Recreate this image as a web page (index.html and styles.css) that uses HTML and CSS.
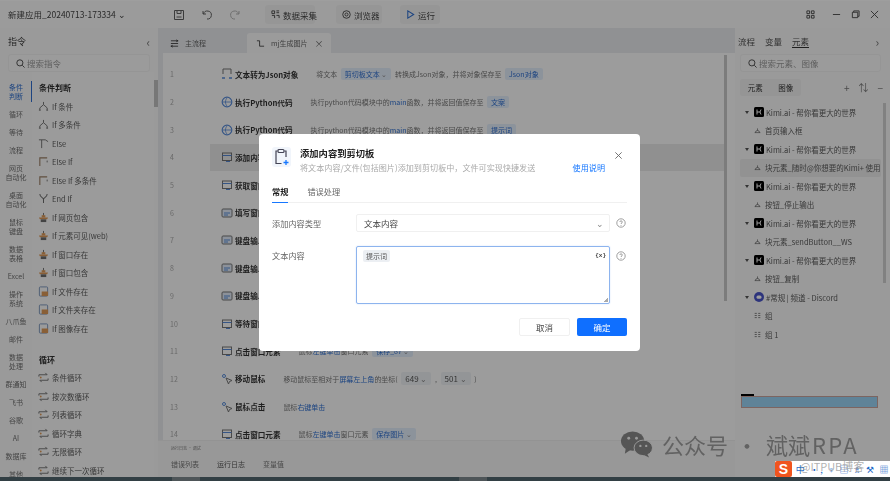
FILE: index.html
```html
<!DOCTYPE html>
<html lang="zh-CN">
<head>
    <meta charset="UTF-8">
    <title>新建应用_20240713-173334</title>
    <link rel="stylesheet" href="styles.css">
</head>
<body>

<svg class="defs" width="0" height="0">
    <symbol id="i-branch" viewBox="0 0 12 12"><path d="M6 1v3M6 4 2 7.500V10M6 4l4 3.500V10M1 10h2M9 10h2" fill="none" stroke="#555" stroke-width="1"/></symbol>
    <symbol id="i-else" viewBox="0 0 12 12"><path d="M1 2h7M4 2v9M8 2l3 2" fill="none" stroke="#555" stroke-width="1"/></symbol>
    <symbol id="i-elseif" viewBox="0 0 12 12"><path d="M2 11V2h8" fill="none" stroke="#8a6a4a" stroke-width="1.200"/><path d="M10 5v2" stroke="#555"/></symbol>
    <symbol id="i-end" viewBox="0 0 12 12"><path d="M2 1c0 4 4 4 4 6s0 3 0 4M10 1c0 4-4 4-4 6" fill="none" stroke="#555" stroke-width="1.100"/></symbol>
    <symbol id="i-cond" viewBox="0 0 12 12"><path d="M6 1v3" stroke="#555"/><path d="M1 6h10l-1 2H2z" fill="#d98a3c"/><rect x="3" y="8" width="6" height="3" fill="#555"/><rect x="4" y="3.500" width="4" height="2.500" fill="#d98a3c"/></symbol>
    <symbol id="i-file" viewBox="0 0 12 12"><rect x="1.500" y="1" width="9" height="10" rx="1" fill="none" stroke="#5f7fae"/><rect x="4" y="6" width="7" height="5" fill="#d98a3c"/></symbol>
    <symbol id="i-loop" viewBox="0 0 12 12"><path d="M1 5V3h9M8 1l2 2M11 7v2H2M4 11 2 9" fill="none" stroke="#555"/><circle cx="3" cy="6" r="1" fill="#d98a3c"/></symbol>
    <symbol id="i-json" viewBox="0 0 12 12"><path d="M2 6V1h8v5" fill="none" stroke="#555"/><path d="M1 10h3M8 10h3" stroke="#2f6fd0" stroke-width="1.500"/></symbol>
    <symbol id="i-py" viewBox="0 0 12 12"><circle cx="6" cy="6" r="4.800" fill="none" stroke="#2f6fd0" stroke-width="1.200"/><path d="M2 6h8M6 2c-2 2-2 6 0 8" fill="none" stroke="#2f6fd0" stroke-width=".8"/></symbol>
    <symbol id="i-win" viewBox="0 0 12 12"><rect x="1.500" y="2" width="9" height="7.500" fill="none" stroke="#555"/><path d="M1.500 4.500h9M5 10.500h4" stroke="#2f6fd0"/></symbol>
    <symbol id="i-key" viewBox="0 0 12 12"><rect x="1" y="2" width="10" height="8" rx="1" fill="#dde8f7" stroke="#555"/><path d="M3 6h6M3 8h4" stroke="#2f6fd0"/></symbol>
    <symbol id="i-mouse" viewBox="0 0 12 12"><circle cx="3" cy="3" r="1.500" fill="none" stroke="#2f6fd0"/><path d="M5 5l6 2.500-2.500 1-1 2.500z" fill="none" stroke="#555"/></symbol>
    <symbol id="i-elem" viewBox="0 0 10 10"><path d="M1 8h8M2 8a3 3 0 0 1 6 0M5 2v3" fill="none" stroke="#555" stroke-width=".9"/></symbol>
    <symbol id="i-grid" viewBox="0 0 10 10"><path d="M1 2h3M1 5h3M1 8h3M6 2h3M6 5h3M6 8h3" stroke="#555"/></symbol>
    <symbol id="i-kimi" viewBox="0 0 10 10"><rect width="10" height="10" rx="1.500" fill="#000"/><path d="M3 2.500v5M3 5h3l1-2.500M6 5l1 2.500" fill="none" stroke="#fff"/></symbol>
    <symbol id="i-discord" viewBox="0 0 10 10"><circle cx="5" cy="5" r="5" fill="#4a55c8"/><rect x="2.500" y="3.500" width="5" height="3.200" rx="1.500" fill="#fff"/></symbol>
    <symbol id="i-help" viewBox="0 0 10 10"><circle cx="5" cy="5" r="4.200" fill="none" stroke="#888" stroke-width=".8"/><path d="M3.800 4c0-1.600 2.500-1.600 2.500 0 0 1-1.300 1-1.300 2M5 7v.8" fill="none" stroke="#888" stroke-width=".8"/></symbol>
</svg>

<div class="app">
    <header class="titlebar">
        <div class="app-name">新建应用_20240713-173334 <span class="caret">⌄</span></div>
        <div class="tools">
            <svg class="tool-ico" viewBox="0 0 12 12"><path d="M1.500 1.500h9v9h-9zM4 1.500v3h4v-3M3.500 8h5" fill="none" stroke="#444"/></svg>
            <svg class="tool-ico" viewBox="0 0 12 12"><path d="M2 2v3h3M2.500 5A4 4 0 1 1 6 10" fill="none" stroke="#444"/></svg>
            <svg class="tool-ico dim" viewBox="0 0 12 12"><path d="M10 2v3H7M9.500 5A4 4 0 1 0 6 10" fill="none" stroke="#777"/></svg>
        </div>
        <div class="top-btn btn-data">
            <svg class="btn-ico" viewBox="0 0 10 10"><path d="M1 1h3v3H1zM6 1h3M6 3h3M1 6h3v3M6 6h3v3" fill="none" stroke="#444"/></svg>数据采集
        </div>
        <div class="top-btn btn-browser">
            <svg class="btn-ico" viewBox="0 0 10 10"><circle cx="5" cy="5" r="4.200" fill="none" stroke="#444"/><circle cx="5" cy="5" r="1.700" fill="none" stroke="#444"/></svg>浏览器
        </div>
        <div class="top-btn btn-run">
            <svg class="btn-ico" viewBox="0 0 10 10"><path d="M2 1v8l6.500-4z" fill="none" stroke="#2f6fd0" stroke-width="1.200"/></svg>运行
        </div>
        <div class="win-controls">
            <svg class="win-ico" viewBox="0 0 10 10"><path d="M1 1h3v3H1zM6 1h3v3H6zM1 6h3v3H1zM6 6h3v3H6z" fill="none" stroke="#444"/></svg>
            <svg class="win-ico" viewBox="0 0 10 10"><path d="M1 5h8" stroke="#444"/></svg>
            <svg class="win-ico" viewBox="0 0 10 10"><path d="M1.500 2.500h6v6h-6zM3 2.500V1h6v6H7.500" fill="none" stroke="#444"/></svg>
            <svg class="win-ico" viewBox="0 0 10 10"><path d="M1 1l8 8M9 1l-8 8" stroke="#444"/></svg>
        </div>
    </header>

    <div class="workspace">
        <aside class="left">
            <div class="panel-head"><span>指令</span><span class="chev">‹</span></div>
            <div class="search">
                <svg class="search-ico" viewBox="0 0 10 10"><circle cx="4.300" cy="4.300" r="3.400" fill="none" stroke="#444"/><path d="M7 7l2.500 2.500" stroke="#444"/></svg>搜索指令
            </div>
            <div class="left-body">
                <nav class="rail">
                    <div class="rail-item two active">条件<br>判断</div>
                    <div class="rail-item">循环</div>
                    <div class="rail-item">等待</div>
                    <div class="rail-item">流程</div>
                    <div class="rail-item two">网页<br>自动化</div>
                    <div class="rail-item two">桌面<br>自动化</div>
                    <div class="rail-item two">鼠标<br>键盘</div>
                    <div class="rail-item two">数据<br>表格</div>
                    <div class="rail-item">Excel</div>
                    <div class="rail-item two">操作<br>系统</div>
                    <div class="rail-item">八爪鱼</div>
                    <div class="rail-item">邮件</div>
                    <div class="rail-item two">数据<br>处理</div>
                    <div class="rail-item">群通知</div>
                    <div class="rail-item">飞书</div>
                    <div class="rail-item">谷歌</div>
                    <div class="rail-item">AI</div>
                    <div class="rail-item">数据库</div>
                    <div class="rail-item">其他</div>
                </nav>
                <div class="cmds">
                    <h3 class="cmd-head">条件判断</h3>
                    <div class="cmd"><svg><use href="#i-branch"/></svg>If 条件</div>
                    <div class="cmd"><svg><use href="#i-branch"/></svg>If 多条件</div>
                    <div class="cmd"><svg><use href="#i-else"/></svg>Else</div>
                    <div class="cmd"><svg><use href="#i-elseif"/></svg>Else If</div>
                    <div class="cmd"><svg><use href="#i-elseif"/></svg>Else If 多条件</div>
                    <div class="cmd"><svg><use href="#i-end"/></svg>End If</div>
                    <div class="cmd"><svg><use href="#i-cond"/></svg>If 网页包含</div>
                    <div class="cmd"><svg><use href="#i-cond"/></svg>If 元素可见(web)</div>
                    <div class="cmd"><svg><use href="#i-cond"/></svg>If 窗口存在</div>
                    <div class="cmd"><svg><use href="#i-cond"/></svg>If 窗口包含</div>
                    <div class="cmd"><svg><use href="#i-file"/></svg>If 文件存在</div>
                    <div class="cmd"><svg><use href="#i-file"/></svg>If 文件夹存在</div>
                    <div class="cmd"><svg><use href="#i-file"/></svg>If 图像存在</div>
                    <h3 class="cmd-head second">循环</h3>
                    <div class="cmd"><svg><use href="#i-loop"/></svg>条件循环</div>
                    <div class="cmd"><svg><use href="#i-loop"/></svg>按次数循环</div>
                    <div class="cmd"><svg><use href="#i-loop"/></svg>列表循环</div>
                    <div class="cmd"><svg><use href="#i-loop"/></svg>循环字典</div>
                    <div class="cmd"><svg><use href="#i-loop"/></svg>无限循环</div>
                    <div class="cmd"><svg><use href="#i-loop"/></svg>继续下一次循环</div>
                </div>
                <div class="left-scroll"></div>
            </div>
        </aside>

        <main class="center">
            <div class="tabs">
                <div class="tab">
                    <svg viewBox="0 0 10 10"><path d="M1 2h8M7 1l2 1-2 1M9 8H1M3 7 1 8l2 1M1 5h8" fill="none" stroke="#444"/></svg>主流程
                </div>
                <div class="tab open">
                    <svg viewBox="0 0 10 10"><path d="M1 2h3v6h5" fill="none" stroke="#444"/></svg>mj生成图片<span class="tab-x">×</span>
                </div>
            </div>
            <div class="flow">
                <div class="steps">
                    <div class="step"><span class="num">1</span><svg><use href="#i-json"/></svg><b>文本转为Json对象</b><span class="desc">将文本 <span class="pill">剪切板文本 <i>⌄</i></span> 转换成Json对象，并将对象保存至 <span class="pill">Json对象</span></span></div>
                    <div class="step"><span class="num">2</span><svg><use href="#i-py"/></svg><b>执行Python代码</b><span class="desc">执行python代码模块中的<em>main</em>函数，并将返回值保存至 <span class="pill">文案</span></span></div>
                    <div class="step"><span class="num">3</span><svg><use href="#i-py"/></svg><b>执行Python代码</b><span class="desc">执行python代码模块中的<em>main</em>函数，并将返回值保存至 <span class="pill">提示词</span></span></div>
                    <div class="step current"><span class="num">4</span><svg><use href="#i-win"/></svg><b>添加内容到剪切板</b></div>
                    <div class="step"><span class="num">5</span><svg><use href="#i-win"/></svg><b>获取窗口</b></div>
                    <div class="step"><span class="num">6</span><svg><use href="#i-key"/></svg><b>填写窗口</b></div>
                    <div class="step"><span class="num">7</span><svg><use href="#i-key"/></svg><b>键盘输入</b></div>
                    <div class="step"><span class="num">8</span><svg><use href="#i-key"/></svg><b>键盘输入</b></div>
                    <div class="step"><span class="num">9</span><svg><use href="#i-key"/></svg><b>键盘输入</b></div>
                    <div class="step"><span class="num">10</span><svg><use href="#i-win"/></svg><b>等待窗口</b></div>
                    <div class="step"><span class="num">11</span><svg><use href="#i-win"/></svg><b>点击窗口元素</b><span class="desc">鼠标<em>左键单击</em>窗口元素 <span class="pill">保存_87 <i>⌄</i></span></span></div>
                    <div class="step"><span class="num">12</span><svg><use href="#i-mouse"/></svg><b>移动鼠标</b><span class="desc">移动鼠标至相对于<em>屏幕左上角</em>的坐标( <span class="pill grey">649 <i>⌄</i></span> , <span class="pill grey">501 <i>⌄</i></span> )</span></div>
                    <div class="step"><span class="num">13</span><svg><use href="#i-mouse"/></svg><b>鼠标点击</b><span class="desc">鼠标<em>右键单击</em></span></div>
                    <div class="step"><span class="num">14</span><svg><use href="#i-win"/></svg><b>点击窗口元素</b><span class="desc">鼠标<em>左键单击</em>窗口元素 <span class="pill">保存图片 <i>⌄</i></span></span></div>
                </div>
                <div class="flow-scroll"></div>
            </div>
            <div class="bottom">
                <div class="bottom-note">运行日志 · 调试</div>
                <div class="bottom-tabs">
                    <span>错误列表</span>
                    <span class="on">运行日志</span>
                    <span>变量值</span>
                </div>
            </div>
        </main>

        <aside class="right">
            <div class="right-tabs"><span>流程</span><span>变量</span><span class="on">元素</span><span class="chev">›</span></div>
            <div class="search right-search">
                <svg class="search-ico" viewBox="0 0 10 10"><circle cx="4.300" cy="4.300" r="3.400" fill="none" stroke="#444"/><path d="M7 7l2.500 2.500" stroke="#444"/></svg>搜索元素、图像
            </div>
            <div class="sub-row">
                <div class="seg"><span>元素</span><span>图像</span></div>
                <div class="sub-tools"><span>+</span><span>⇅</span><span>−</span></div>
            </div>
            <div class="tree-wrap">
                <div class="tree">
                    <div class="node"><span class="arrow"></span><svg><use href="#i-kimi"/></svg>Kimi.ai - 帮你看更大的世界</div>
                    <div class="leaf"><svg><use href="#i-elem"/></svg>首页输入框</div>
                    <div class="node"><span class="arrow"></span><svg><use href="#i-kimi"/></svg>Kimi.ai - 帮你看更大的世界</div>
                    <div class="leaf picked"><svg><use href="#i-elem"/></svg>块元素_随时@你想要的Kimi+ 使用</div>
                    <div class="node"><span class="arrow"></span><svg><use href="#i-kimi"/></svg>Kimi.ai - 帮你看更大的世界</div>
                    <div class="leaf"><svg><use href="#i-elem"/></svg>按钮_停止输出</div>
                    <div class="node"><span class="arrow"></span><svg><use href="#i-kimi"/></svg>Kimi.ai - 帮你看更大的世界</div>
                    <div class="leaf"><svg><use href="#i-elem"/></svg>块元素_sendButton__WS</div>
                    <div class="node"><span class="arrow"></span><svg><use href="#i-kimi"/></svg>Kimi.ai - 帮你看更大的世界</div>
                    <div class="leaf"><svg><use href="#i-elem"/></svg>按钮_复制</div>
                    <div class="node"><span class="arrow"></span><svg><use href="#i-discord"/></svg>#常规 | 频道 - Discord</div>
                    <div class="leaf"><svg><use href="#i-grid"/></svg>组</div>
                    <div class="leaf"><svg><use href="#i-grid"/></svg>组 1</div>
                </div>
                <div class="tree-scroll"></div>
            </div>
            <div class="preview">
                <div class="preview-tag"></div>
                <div class="preview-img"></div>
            </div>
        </aside>
    </div>

    <div class="taskbar"><span class="task-a"></span><span class="task-b"></span></div>
</div>

<div class="overlay"></div> <!-- darkens the app behind the dialog -->

<div class="watermark">
    <svg class="wx" viewBox="0 0 34 28"><ellipse cx="13" cy="11" rx="12" ry="10" fill="#555"/><path d="M6 18l-1 6 6-4z" fill="#555"/><ellipse cx="24" cy="18" rx="9.500" ry="8" fill="#555" stroke="#999"/><path d="M28 24l2 4-6-3z" fill="#555"/><circle cx="9" cy="8" r="1.500" fill="#999"/><circle cx="17" cy="8" r="1.500" fill="#999"/><circle cx="21" cy="16" r="1.200" fill="#999"/><circle cx="27" cy="16" r="1.200" fill="#999"/></svg>
    <span>公众号</span><span class="wm-dot">·</span><span>斌斌<span class="wm-rpa">RPA</span></span>
</div>

<div class="ime">
    <span class="ime-logo">S</span>
    <span class="ime-text">中 ·, ♆ ▤ ♗ ⚒ ▦</span>
    <span class="ime-mark">@ITPUB博客</span>
</div>

<section class="dialog">
    <div class="dialog-head">
        <div class="dialog-ico">
            <svg viewBox="0 0 18 20"><path d="M5 4H3.500v12.500H9M12 4h1.500v6" fill="none" stroke="#445" stroke-width="1.200"/><rect x="5.500" y="2.500" width="6" height="3" rx="1" fill="none" stroke="#445" stroke-width="1.200"/><path d="M13.500 13v5M11 15.500h5" stroke="#1677ff" stroke-width="1.300"/></svg>
        </div>
        <div class="dialog-title">
            <h2>添加内容到剪切板</h2>
            <p>将文本内容/文件(包括图片)添加到剪切板中，文件可实现快捷发送<a>使用说明</a></p>
        </div>
        <svg class="dialog-close" viewBox="0 0 10 10"><path d="M1.500 1.500l7 7M8.500 1.500l-7 7" stroke="#666"/></svg>
    </div>
    <div class="dialog-tabs"><span class="on">常规</span><span>错误处理</span></div>
    <div class="form-row first">
        <label>添加内容类型</label>
        <div class="select">文本内容<span class="select-caret">⌄</span></div>
        <svg class="help"><use href="#i-help"/></svg>
    </div>
    <div class="form-row top">
        <label>文本内容</label>
        <div class="textarea">
            <span class="tag">提示词</span>
            <span class="var">{x}</span>
            <span class="resize"></span>
        </div>
        <svg class="help"><use href="#i-help"/></svg>
    </div>
    <div class="dialog-foot">
        <button class="btn">取消</button>
        <button class="btn primary">确定</button>
    </div>
</section>

</body>
</html>
```

FILE: styles.css
```css
/* Base */
* {
    box-sizing: border-box;
}

html, body {
    margin: 0;
    padding: 0;
    height: 481px;
    overflow: hidden;
}

body {
    position: relative;
    font-family: "Noto Sans CJK SC", "Noto Sans", sans-serif;
    font-size: 7.5px;
    color: #333;
    background: #fff;
}

.defs {
    position: absolute;
}

/* App window behind the dialog */
.app {
    display: flex;
    flex-direction: column;
    width: 890px;
    height: 481px;
    border-top: 1px solid #fff;
    background: #fbfbfb;
    filter: blur(0.6px);
}

.titlebar {
    display: flex;
    align-items: center;
    height: 27px;
    flex: none;
    padding-left: 8px;
    background: #fbfbfb;
}

.app-name {
    width: 165px;
    font-size: 8.5px;
    color: #444;
    white-space: nowrap;
}

.caret {
    font-size: 9px;
}

.tools {
    display: flex;
    gap: 16px;
    width: 92px;
}

.tool-ico {
    width: 12px;
    height: 12px;
    opacity: 0.85;
}

.tool-ico.dim {
    opacity: 0.55;
}

.top-btn {
    display: flex;
    align-items: center;
    gap: 3px;
    height: 19px;
    padding: 0 6px;
    border-radius: 3px;
    font-size: 8.5px;
    color: #444;
    background: #f3f3f3;
    white-space: nowrap;
}

.btn-data {
    width: 50px;
}

.btn-browser {
    width: 46px;
    margin-left: 21px;
}

.btn-run {
    width: 40px;
    margin-left: 18px;
}

.btn-ico {
    width: 9px;
    height: 9px;
    flex: none;
}

.win-controls {
    display: flex;
    align-items: center;
    gap: 10px;
    margin-left: auto;
    padding-right: 11px;
}

.win-ico {
    width: 9px;
    height: 9px;
}

.win-ico:first-child {
    margin-right: 7px;
}

.workspace {
    flex: 1;
    display: flex;
    min-height: 0;
}

/* Left commands panel */
.left {
    width: 158px;
    flex: none;
    display: flex;
    flex-direction: column;
    background: #f8f8f8;
}

.panel-head {
    display: flex;
    justify-content: space-between;
    align-items: center;
    height: 26px;
    padding: 0 8px;
    font-size: 9px;
    color: #444;
}

.chev {
    font-size: 12px;
    color: #777;
}

.search {
    display: flex;
    align-items: center;
    gap: 2px;
    height: 18px;
    margin: 0 8px;
    padding-left: 7px;
    border: 1px solid #f1f1f1;
    border-radius: 3px;
    font-size: 8.5px;
    color: #999;
    background: #fafafa;
}

.search-ico {
    width: 9px;
    height: 9px;
    flex: none;
}

.left-body {
    flex: 1;
    display: flex;
    min-height: 0;
    overflow: hidden;
}

.rail {
    width: 32px;
    flex: none;
    padding-top: 6px;
    text-align: center;
    font-size: 7px;
    line-height: 9px;
    color: #707070;
    background: #f8f8f8;
}

.rail-item {
    display: flex;
    align-items: center;
    justify-content: center;
    height: 18px;
}

.rail-item.two {
    height: 27px;
}

.rail-item.active {
    color: #2f6fd0;
    background: linear-gradient(#2f6fd0, #2f6fd0) right 3px / 1.500px 21px no-repeat;
}

.cmds {
    flex: 1;
    padding: 7px 0 0 7px;
    background: #fbfbfb;
    min-width: 0;
}

.cmd-head {
    margin: 0;
    height: 18px;
    line-height: 18px;
    font-size: 8px;
    font-weight: 700;
    color: #333;
}

.cmd-head.second {
    margin-top: 13px;
}

.cmd {
    display: flex;
    align-items: center;
    gap: 3px;
    height: 18.500px;
    margin-left: -1px;
    color: #5c5c5c;
    white-space: nowrap;
}

.cmd svg {
    width: 11px;
    height: 11px;
    flex: none;
    opacity: 0.85;
}

.left-scroll {
    width: 4px;
    flex: none;
    height: 27px;
    margin-top: 8px;
    background: #c0c0c0;
    align-self: flex-start;
}

/* Center flow */
.center {
    flex: 1;
    min-width: 0;
    display: flex;
    flex-direction: column;
    background: #e8eaee;
}

.tabs {
    display: flex;
    align-items: flex-end;
    height: 25px;
    flex: none;
    padding-left: 12px;
}

.tab {
    display: flex;
    align-items: center;
    gap: 6px;
    height: 20px;
    width: 77px;
    font-size: 7px;
    color: #666;
}

.tab svg {
    width: 9px;
    height: 9px;
    flex: none;
}

.tab.open {
    width: 84px;
    padding-left: 9px;
    border-radius: 3px 3px 0 0;
    background: #fbfbfb;
}

.tab-x {
    margin-left: 1px;
    font-size: 9px;
}

.flow {
    flex: 1;
    min-height: 0;
    display: flex;
    margin-left: 5px;
    background: #fcfcfc;
    overflow: hidden;
}

.steps {
    flex: 1;
    min-width: 0;
    padding-top: 7.500px;
}

.step {
    display: flex;
    align-items: center;
    height: 27.700px;
    white-space: nowrap;
}

.step.current {
    background: linear-gradient(to right, transparent 47px, #e9e9e9 47px);
}

.num {
    width: 58px;
    flex: none;
    padding-left: 7px;
    font-size: 7px;
    color: #aaa;
}

.step svg {
    width: 12px;
    height: 12px;
    flex: none;
    margin-right: 2px;
    opacity: 0.8;
}

.step b {
    font-size: 7.600px;
    color: #333;
}

.desc {
    margin-left: 18px;
    font-size: 7px;
    color: #777;
}

.desc em {
    font-style: normal;
    color: #2f6fd0;
}

.pill {
    display: inline-block;
    margin: 0 2px;
    padding: 1px 4px;
    border-radius: 2px;
    color: #2f6fd0;
    background: #e3edfb;
}

.pill.grey {
    color: #555;
    background: #eef1f4;
    font-size: 8px;
}

.pill i {
    font-style: normal;
    color: #888;
}

.flow-scroll {
    width: 3px;
    flex: none;
    height: 246px;
    margin: 2px 8px 0 0;
    background: #c9c9c9;
}

.bottom {
    height: 37px;
    flex: none;
    padding-left: 13px;
    background: #f6f6f6;
    border-top: 1px solid #eee;
}

.bottom-note {
    height: 14px;
    line-height: 14px;
    font-size: 4px;
    color: #777;
}

.bottom-tabs {
    display: flex;
    gap: 18px;
    font-size: 7px;
    color: #777;
}

.bottom-tabs span {
    height: 22px;
    line-height: 18px;
}

.bottom-tabs .on {
    color: #555;
    box-shadow: 0 1px 0 #2f6fd0;
}

/* Right panel */
.right {
    width: 155px;
    flex: none;
    padding: 0 3px;
    background: #f8f8f8;
    display: flex;
    flex-direction: column;
}

.right-tabs {
    display: flex;
    align-items: center;
    gap: 10px;
    height: 26px;
    font-size: 8.500px;
    color: #555;
}

.right-tabs .on {
    border-bottom: 1px solid #333;
}

.right-tabs .chev {
    margin-left: auto;
    padding-right: 8px;
}

.right-search {
    margin: 0 0 0 2px;
    width: 141px;
}

.sub-row {
    display: flex;
    align-items: center;
    justify-content: space-between;
    height: 17px;
    margin: 7px 0 0 2px;
    padding-right: 4px;
}

.seg {
    display: flex;
    width: 61px;
    height: 17px;
    border-radius: 3px;
    background: #f0f0f0;
    font-size: 7.500px;
    line-height: 17px;
}

.seg span {
    flex: 1;
    text-align: center;
}

.sub-tools {
    display: flex;
    gap: 9px;
    font-size: 10px;
    color: #777;
}

.tree-wrap {
    display: flex;
    margin-top: 7px;
    height: 241px;
    overflow: hidden;
}

.tree {
    flex: 1;
    min-width: 0;
    padding-left: 2px;
    color: #5c5c5c;
    white-space: nowrap;
}

.node, .leaf {
    display: flex;
    align-items: center;
    height: 18.500px;
}

.node svg {
    width: 10px;
    height: 10px;
    margin-right: 2px;
    flex: none;
}

.arrow {
    width: 0;
    height: 0;
    margin: 0 5px;
    border-left: 2.500px solid transparent;
    border-right: 2.500px solid transparent;
    border-top: 3.500px solid #555;
}

.leaf {
    padding-left: 14px;
}

.leaf svg {
    width: 7px;
    height: 7px;
    margin-right: 4px;
    flex: none;
}

.leaf.picked {
    border-radius: 2px;
    background: #ececec;
}

.tree-scroll {
    width: 3px;
    flex: none;
    height: 180px;
    margin: 0 1px 0 2px;
    background: #d0d0d0;
}

.preview {
    margin: 6px 9px 0 3px;
    padding: 44px 0 0;
}

.preview-tag {
    width: 13px;
    height: 2px;
    background: #000;
}

.preview-img {
    height: 12px;
    background: #9ad4f5;
    border: 1px solid #c9a39d;
}

.taskbar {
    display: flex;
    height: 4px;
    flex: none;
    background: #52666e;
}

.task-a {
    width: 28px;
    margin-left: 172px;
    background: #7f8a8f;
}

.task-b {
    width: 28px;
    margin-left: 259px;
    background: #7f8a8f;
}

/* Overlay and things on top of it */
.overlay {
    position: absolute;
    top: 0;
    left: 0;
    right: 0;
    bottom: 0;
    background: rgba(0, 0, 0, 0.38);
}

.watermark {
    position: absolute;
    left: 620px;
    top: 430px;
    display: flex;
    align-items: center;
    font-size: 22px;
    line-height: 28px;
    color: #626262;
    white-space: nowrap;
    filter: blur(0.3px);
}

.wx {
    width: 33px;
    height: 28px;
    margin-right: 9px;
}

.wm-dot {
    width: 38px;
    text-align: center;
}

.wm-rpa {
    margin-left: 2px;
    letter-spacing: 2.300px;
}

.ime {
    position: absolute;
    left: 775px;
    top: 461px;
    display: flex;
    align-items: center;
    width: 115px;
    height: 16px;
    background: #fff;
}

.ime-logo {
    width: 18px;
    height: 16px;
    border-radius: 2px;
    font: 700 14px/16px "Liberation Sans", sans-serif;
    text-align: center;
    color: #fff;
    background: #f0541e;
}

.ime-text {
    margin-left: 4px;
    font-size: 9px;
    letter-spacing: 1.500px;
    color: #1c69c8;
    white-space: nowrap;
}

.ime-mark {
    position: absolute;
    left: 25px;
    top: -2px;
    font-size: 11px;
    line-height: 14px;
    color: rgba(150, 150, 150, 0.75);
    white-space: nowrap;
}

/* Dialog */
.dialog {
    position: absolute;
    left: 259px;
    top: 134px;
    width: 381px;
    height: 217px;
    padding: 13px 13px 0;
    border-radius: 4px;
    background: #fff;
    filter: blur(0.45px);
}

.dialog-head {
    display: flex;
    align-items: flex-start;
}

.dialog-ico {
    width: 19px;
    height: 20px;
    flex: none;
    border-radius: 3px;
    background: #f1f5fb;
}

.dialog-ico svg {
    display: block;
    width: 19px;
    height: 20px;
}

.dialog-title {
    margin-left: 9px;
    width: 305px;
}

.dialog-title h2 {
    margin: 0;
    height: 13px;
    font-size: 9.300px;
    line-height: 13px;
    font-weight: 700;
    color: #222;
}

.dialog-title p {
    display: flex;
    justify-content: space-between;
    margin: 2px 0 0;
    font-size: 8.100px;
    line-height: 12px;
    color: #aaa;
    white-space: nowrap;
}

.dialog-title a {
    color: #1677ff;
}

.dialog-close {
    width: 9px;
    height: 9px;
    margin: 4px 0 0 9px;
    flex: none;
}

.dialog-tabs {
    display: flex;
    gap: 19px;
    height: 19px;
    margin-top: 10px;
    border-bottom: 1px solid #f0f0f0;
    font-size: 8.200px;
    line-height: 15px;
    color: #666;
}

.dialog-tabs span {
    height: 19px;
}

.dialog-tabs .on {
    font-weight: 700;
    color: #222;
    border-bottom: 1.500px solid #1677ff;
}

.form-row {
    display: flex;
    align-items: center;
    margin-top: 14px;
    font-size: 8.200px;
    color: #666;
}

.form-row.first {
    margin-top: 11px;
}

.form-row.top {
    align-items: flex-start;
}

.form-row label {
    width: 84px;
    flex: none;
    line-height: 18px;
}

.select {
    display: flex;
    justify-content: space-between;
    width: 254px;
    height: 18px;
    padding: 0 5px 0 7px;
    border: 1px solid #f0f0f0;
    border-radius: 2px;
    font-size: 8.500px;
    line-height: 16px;
    color: #444;
}

.select-caret {
    color: #888;
}

.help {
    width: 10px;
    height: 10px;
    margin-left: 6px;
    flex: none;
}

.form-row.top .help {
    margin-top: 5px;
}

.textarea {
    position: relative;
    width: 254px;
    height: 58px;
    border: 1px solid #8db4ee;
    border-radius: 2px;
    box-shadow: 0 0 1.500px #c3d9f8;
}

.tag {
    display: inline-block;
    margin: 3px 0 0 6px;
    padding: 0 3px;
    border-radius: 2px;
    font-size: 7px;
    line-height: 12px;
    color: #555;
    background: #eceff3;
}

.var {
    position: absolute;
    right: 3px;
    top: 3px;
    font: 700 6px/12px "Liberation Mono", monospace;
    color: #444;
}

.resize {
    position: absolute;
    right: 1px;
    bottom: 1px;
    width: 4px;
    height: 4px;
    background: linear-gradient(135deg, transparent 50%, #aaa 50%);
}

.dialog-foot {
    display: flex;
    justify-content: flex-end;
    gap: 7px;
    margin-top: 14px;
}

.btn {
    width: 51px;
    height: 18px;
    padding: 0;
    border: 1px solid #f0f0f0;
    border-radius: 2px;
    font-family: inherit;
    font-size: 8.500px;
    color: #444;
    background: #fff;
}

.btn.primary {
    width: 50px;
    border: none;
    color: #fff;
    background: #0f6fff;
}
```
